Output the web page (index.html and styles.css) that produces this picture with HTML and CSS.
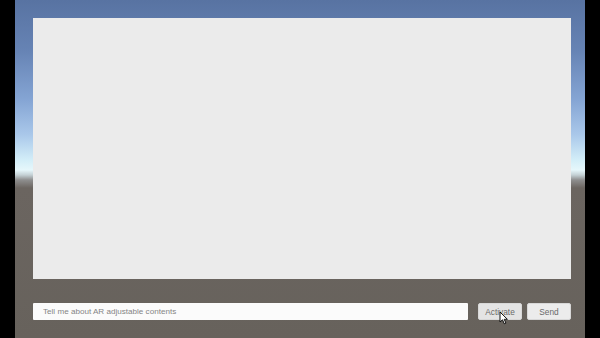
FILE: index.html
```html
<!DOCTYPE html>
<html lang="en">
<head>
  <meta charset="UTF-8">
  <title>AR Chat</title>
  <link rel="stylesheet" href="styles.css">
</head>
<body>
  <div class="scene">
    <!-- Response area -->
    <div class="panel"></div>

    <!-- Input bar -->
    <div class="bar">
      <input class="prompt" type="text" placeholder="Tell me about AR adjustable contents">
      <button class="btn btn-active">Activate
        <svg class="cursor" width="10" height="14" viewBox="0 0 10 14">
          <path d="M1 1 L1 11 L3.5 8.8 L5.3 12.8 L6.9 12.1 L5.2 8.3 L8.4 8.3 Z" fill="#fff" stroke="#111" stroke-width="1" stroke-linejoin="round"/>
        </svg>
      </button>
      <button class="btn">Send</button>
    </div>
  </div>
</body>
</html>
```
FILE: styles.css
```css
html, body { margin: 0; height: 100%; }
body {
  background: #000;
  font-family: "Liberation Sans", Arial, sans-serif;
  overflow: hidden;
}
.scene {
  box-sizing: border-box;
  width: 570px;
  height: 338px;
  margin: 0 15px;
  padding: 18px 14px 0 18px;
  display: flex;
  flex-direction: column;
  gap: 24px;
  background: linear-gradient(to bottom,
    #5873a2 0px,
    #6683b4 50px,
    #85a5d4 100px,
    #aac8ea 135px,
    #d3eef8 160px,
    #e6f7fb 170px,
    #c4d0d4 175px,
    #8e8e8e 180px,
    #6b6560 188px,
    #67625c 338px);
}
.panel {
  height: 261px;
  background: #ebebeb;
  flex: none;
}
.bar {
  display: flex;
  height: 17px;
  gap: 5px;
}
.prompt {
  box-sizing: border-box;
  width: 435px;
  height: 17px;
  margin: 0 5px 0 0;
  padding: 0 10px;
  border: none;
  border-radius: 1px;
  background: #fbfbfb;
  font-family: inherit;
  font-size: 8.1px;
  outline: none;
}
.prompt::placeholder { color: #858585; }
.btn {
  position: relative;
  box-sizing: border-box;
  width: 44px;
  height: 17px;
  padding: 0;
  border: 1px solid #d8d8d8;
  border-radius: 2px;
  background: #ececec;
  color: #6a6a6a;
  font-family: inherit;
  font-size: 8.3px;
}
.btn-active { background: #e4e4e4; }
.cursor {
  position: absolute;
  left: 20px;
  top: 7px;
}
```
